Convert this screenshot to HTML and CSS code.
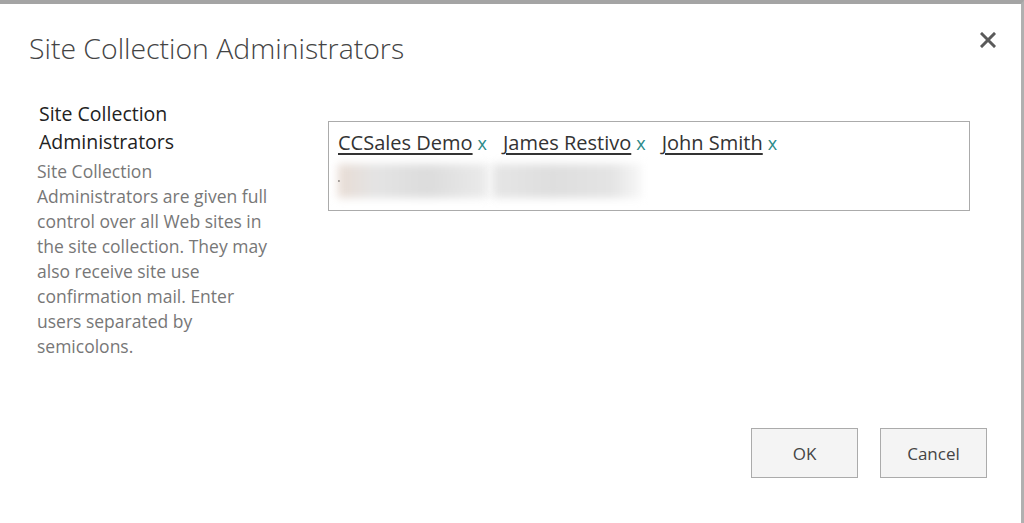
FILE: index.html
```html
<!DOCTYPE html>
<html lang="en">
<head>
    <meta charset="UTF-8">
    <title>Site Collection Administrators</title>
    <link rel="stylesheet" href="styles.css">
</head>
<body>
    <div class="dialog">
        <div class="dialog-header">
            <h1>Site Collection Administrators</h1>
            <button class="close" title="Close">
                <svg width="16" height="16" viewBox="0 0 16 16">
                    <path d="M2 2 L14 14 M14 2 L2 14" stroke="#5a5a5a" stroke-width="3" stroke-linecap="square"/>
                </svg>
            </button>
        </div>

        <div class="section">
            <div class="section-info">
                <h3>Site Collection<br>Administrators</h3>
                <p>Site Collection<br>Administrators are given full<br>control over all Web sites in<br>the site collection. They may<br>also receive site use<br>confirmation mail. Enter<br>users separated by<br>semicolons.</p>
            </div>
            <div class="section-field">
                <div class="people-picker">
                    <div class="tokens">
                        <span class="token"><a href="#">CCSales Demo</a><span class="remove">x</span></span>
                        <span class="token"><a href="#">James Restivo</a><span class="remove">x</span></span>
                        <span class="token"><a href="#">John Smith</a><span class="remove">x</span></span>
                    </div>
                    <div class="blurred">
                        <span class="dot"></span>
                        <span class="smudge one"></span>
                        <span class="smudge two"></span>
                    </div>
                </div>
            </div>
        </div>

        <div class="actions">
            <button class="btn">OK</button>
            <button class="btn">Cancel</button>
        </div>
    </div>
</body>
</html>
```

FILE: styles.css
```css
html, body {
    margin: 0;
    padding: 0;
    height: 100%;
}
body {
    font-family: "Open Sans", "Noto Sans", sans-serif;
    background-color: #ffffff;
    overflow: hidden;
}
.dialog {
    display: flex;
    flex-direction: column;
    height: 523px;
    box-sizing: border-box;
    background-color: white;
    border-top: 4px solid #a4a4a4;
    border-right: 3px solid #b0b0b0;
    padding: 0 0 45px 29px;
}
.dialog-header {
    display: flex;
    justify-content: space-between;
    align-items: flex-start;
    padding-top: 24px;
    padding-right: 25px;
}
h1 {
    margin: 0;
    font-size: 28.4px;
    font-weight: 300;
    color: #444;
    line-height: 40px;
}
.close {
    background: none;
    border: none;
    padding: 0;
    margin-top: 4px;
    cursor: pointer;
    width: 16px;
    height: 16px;
}
.section {
    display: flex;
    margin-top: 32px;
    padding-left: 10px;
}
.section-info {
    width: 250px;
    white-space: nowrap;
}
.section-info h3 {
    margin: 0;
    font-size: 19.5px;
    font-weight: 400;
    color: #222;
    line-height: 28px;
}
.section-info p {
    margin: 3px 0 0 -2px;
    font-size: 17.5px;
    color: #777;
    line-height: 25px;
}
.section-field {
    margin-left: 39px;
    padding-top: 21px;
}
.people-picker {
    width: 642px;
    height: 90px;
    border: 1px solid #ababab;
    box-sizing: border-box;
    padding: 7px 9px;
}
.tokens {
    display: flex;
    gap: 16px;
    line-height: 28px;
}
.token a {
    color: #333;
    font-size: 20px;
    text-decoration: underline;
    text-underline-offset: 3px;
}
.remove {
    color: #2b8a8a;
    font-size: 18px;
    margin-left: 5px;
}
.blurred {
    display: flex;
    align-items: center;
    height: 38px;
    margin-top: 4px;
}
.dot {
    width: 2px;
    height: 2px;
    background: #555;
    margin-right: -2px;
}
.smudge {
    display: block;
    height: 34px;
    filter: blur(4px);
}
.smudge.one {
    width: 150px;
    background: linear-gradient(90deg, #e8dcd4, #e4e4e4 25%, #dcdcdc 60%, #ebebeb);
}
.smudge.two {
    width: 150px;
    margin-left: 4px;
    background: linear-gradient(90deg, #e6e6e6, #dedede 40%, #e4e4e4 80%, #f8f8f8);
}
.actions {
    display: flex;
    justify-content: flex-end;
    gap: 22px;
    margin-top: auto;
    padding-right: 34px;
}
.btn {
    width: 107px;
    height: 50px;
    background-color: #f4f4f4;
    border: 1px solid #ababab;
    font-family: "Open Sans", "Noto Sans", sans-serif;
    font-size: 17px;
    color: #444;
    cursor: pointer;
}
```
